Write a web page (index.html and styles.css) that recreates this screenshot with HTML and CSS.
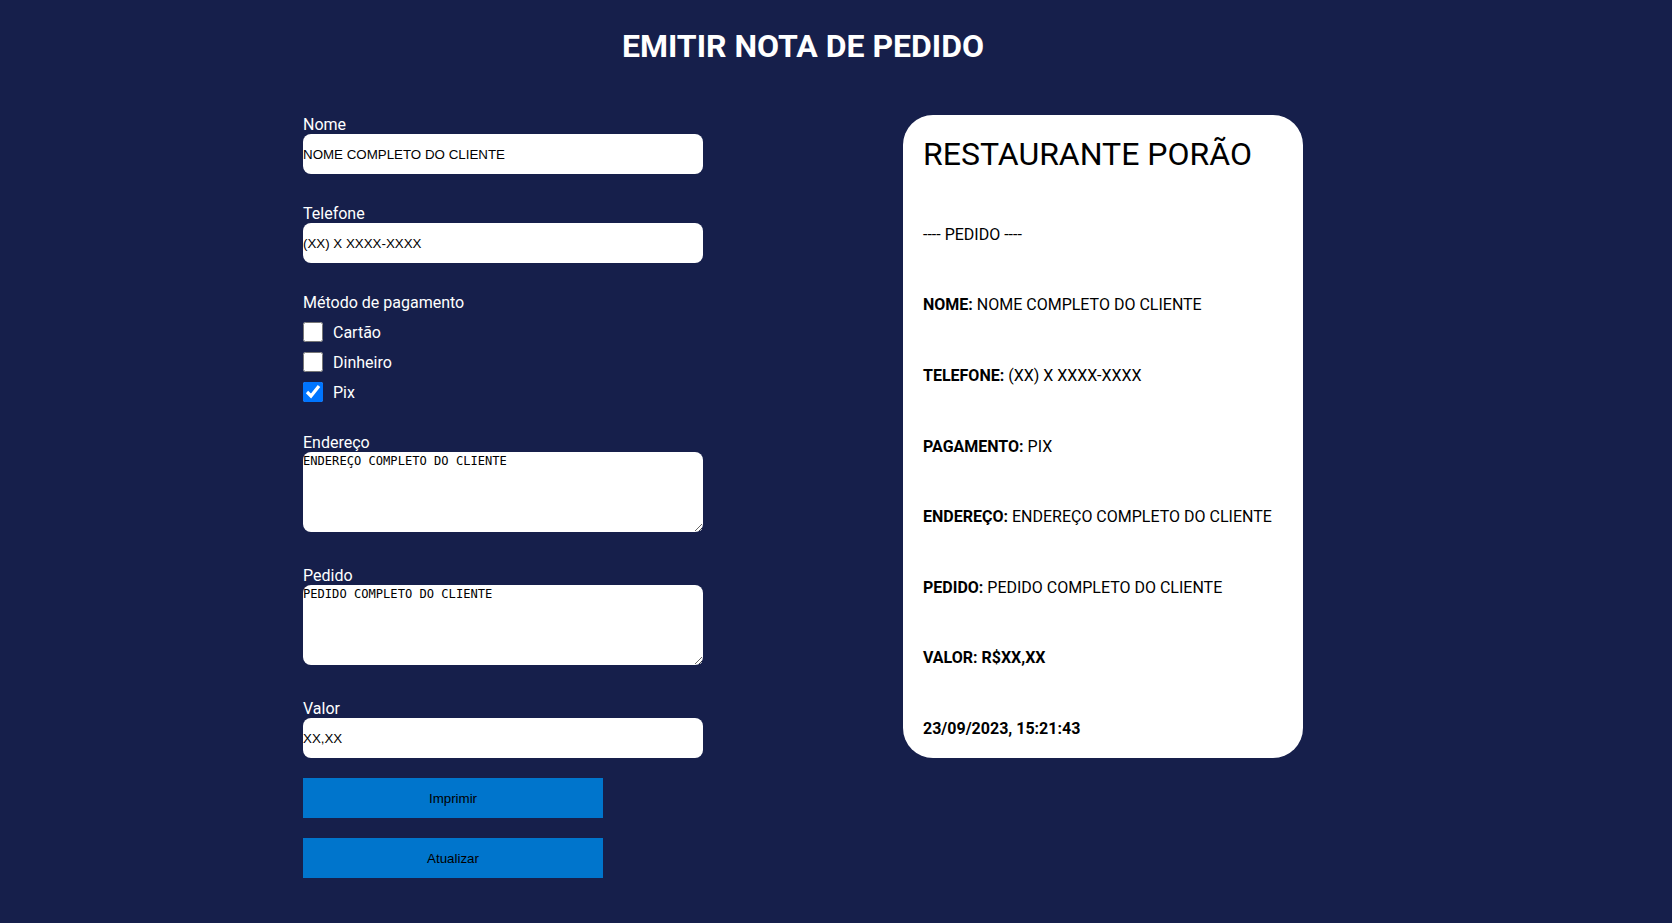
FILE: index.html
```html
<!DOCTYPE html>
<html lang="pt-BR">
<head>
<meta charset="utf-8">
<title>Emitir Nota de Pedido</title>
<link rel="stylesheet" href="styles.css">
</head>
<body>
<div class="page">
  <h1 class="title">EMITIR NOTA DE PEDIDO</h1>
  <div class="columns">
    <form class="form">
      <div class="field">
        <label class="label">Nome</label>
        <input class="input" type="text" value="NOME COMPLETO DO CLIENTE">
      </div>
      <div class="field">
        <label class="label">Telefone</label>
        <input class="input" type="text" value="(XX) X XXXX-XXXX">
      </div>
      <div class="field field-checks">
        <span class="label">Método de pagamento</span>
        <div class="checks">
          <label class="check"><input type="checkbox" class="box"><span>Cartão</span></label>
          <label class="check"><input type="checkbox" class="box"><span>Dinheiro</span></label>
          <label class="check"><input type="checkbox" class="box" checked><span>Pix</span></label>
        </div>
      </div>
      <div class="field">
        <label class="label">Endereço</label>
        <textarea class="area">ENDEREÇO COMPLETO DO CLIENTE</textarea>
      </div>
      <div class="field">
        <label class="label">Pedido</label>
        <textarea class="area">PEDIDO COMPLETO DO CLIENTE</textarea>
      </div>
      <div class="field">
        <label class="label">Valor</label>
        <input class="input" type="text" value="XX,XX">
      </div>
      <button type="button" class="btn">Imprimir</button>
      <button type="button" class="btn">Atualizar</button>
    </form>
    <div class="card">
      <h2 class="card-title">RESTAURANTE PORÃO</h2>
      <p class="line">---- PEDIDO ----</p>
      <p class="line"><b>NOME:</b> NOME COMPLETO DO CLIENTE</p>
      <p class="line"><b>TELEFONE:</b> (XX) X XXXX-XXXX</p>
      <p class="line"><b>PAGAMENTO:</b> PIX</p>
      <p class="line"><b>ENDEREÇO:</b> ENDEREÇO COMPLETO DO CLIENTE</p>
      <p class="line"><b>PEDIDO:</b> PEDIDO COMPLETO DO CLIENTE</p>
      <p class="line"><b>VALOR: R$XX,XX</b></p>
      <p class="line"><b>23/09/2023, 15:21:43</b></p>
    </div>
  </div>
</div>
</body>
</html>
```
FILE: styles.css
```css
html, body {
  margin: 0;
  padding: 0;
  background: #161f4b;
  height: 100%;
  overflow: hidden;
}

body {
  font-family: Roboto, "Liberation Sans", sans-serif;
  color: #ffffff;
}

.page {
  width: 1606px;
}

.title {
  margin: 27px 0 50px;
  font-size: 32px;
  font-weight: 700;
  line-height: normal;
  text-align: center;
  color: #ffffff;
}

.columns {
  display: flex;
  justify-content: center;
  align-items: flex-start;
  gap: 200px;
}

.form {
  width: 400px;
  display: flex;
  flex-direction: column;
  margin: 0;
}

.field {
  display: flex;
  flex-direction: column;
  margin-bottom: 30px;
}

.field-checks {
  margin-bottom: 31px;
}

.label {
  display: block;
  font-size: 16px;
  line-height: normal;
  color: #ffffff;
}

.input {
  box-sizing: border-box;
  width: 400px;
  height: 40px;
  margin: 0;
  padding: 0;
  border: none;
  border-radius: 8px;
  background: #ffffff;
  color: #000000;
  font-family: "Liberation Sans", Arial, sans-serif;
  font-size: 13.333px;
  outline: none;
}

.area {
  box-sizing: border-box;
  display: block;
  width: 400px;
  height: 80px;
  margin: 0 0 4px;
  padding: 2px 0 0;
  border: none;
  border-radius: 8px;
  background: #ffffff;
  color: #000000;
  font-family: "DejaVu Sans Mono", "Liberation Mono", monospace;
  font-size: 12.1px;
  resize: vertical;
  outline: none;
}

.checks {
  display: flex;
  flex-direction: column;
  gap: 10px;
  margin-top: 10px;
}

.check {
  display: flex;
  align-items: center;
  gap: 10px;
  height: 20px;
  font-size: 16px;
  color: #ffffff;
}

.box {
  width: 20px;
  height: 20px;
  margin: 0;
}

.btn {
  width: 300px;
  height: 40px;
  margin: 20px 0 0;
  border: none;
  background: #0075cc;
  color: #000000;
  font-family: "Liberation Sans", Arial, sans-serif;
  font-size: 13.333px;
  padding: 0;
}

.form .field:last-of-type {
  margin-bottom: 0;
}

.card {
  box-sizing: border-box;
  width: 400px;
  height: 643px;
  padding: 20px;
  border-radius: 30px;
  background: #ffffff;
  color: #000000;
  display: flex;
  flex-direction: column;
  justify-content: space-between;
}

.card-title {
  margin: 0;
  font-size: 32px;
  font-weight: 400;
  line-height: normal;
}

.line {
  margin: 0;
  font-size: 16px;
  line-height: normal;
}

.line b {
  font-weight: 700;
}
```
